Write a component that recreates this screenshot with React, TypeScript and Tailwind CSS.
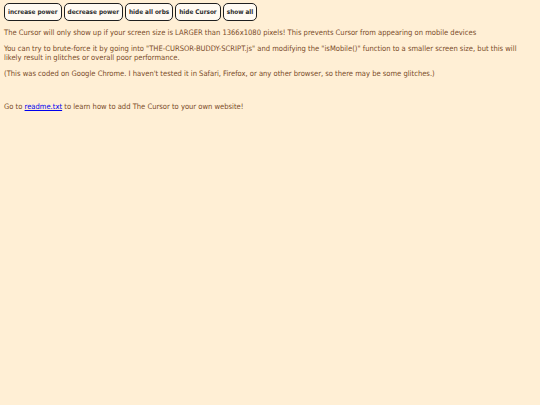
export default function App() {
  const buttons = ['increase power', 'decrease power', 'hide all orbs', 'hide Cursor', 'show all']

  return (
    <div className="min-h-[405px] bg-[#ffefd5] px-[4px] pt-[3px] text-[#7a4b28] text-[7.55px] leading-[9px] font-['DejaVu_Sans_Condensed','DejaVu_Sans',sans-serif]">
      <div className="flex gap-[2px]">
        {buttons.map((b) => (
          <button
            key={b}
            className="h-[18px] px-[3px] rounded-[5px] border-[1.5px] border-[#1f1f1f] bg-[#fffaf2] text-[#2a2a2a] text-[6.4px] font-bold"
          >
            {b}
          </button>
        ))}
      </div>
      <p className="mt-[7px]">
        The Cursor will only show up if your screen size is LARGER than 1366x1080 pixels! This prevents Cursor from appearing on mobile devices
      </p>
      <p className="mt-[7px]">
        You can try to brute-force it by going into "THE-CURSOR-BUDDY-SCRIPT.js" and modifying the "isMobile()" function to a smaller screen size, but this will likely result in glitches or overall poor performance.
      </p>
      <p className="mt-[7px]">
        (This was coded on Google Chrome. I haven't tested it in Safari, Firefox, or any other browser, so there may be some glitches.)
      </p>
      <p className="mt-[24px]">
        Go to <a href="#" className="text-[#0000ee] underline">readme.txt</a> to learn how to add The Cursor to your own website!
      </p>
    </div>
  )
}
